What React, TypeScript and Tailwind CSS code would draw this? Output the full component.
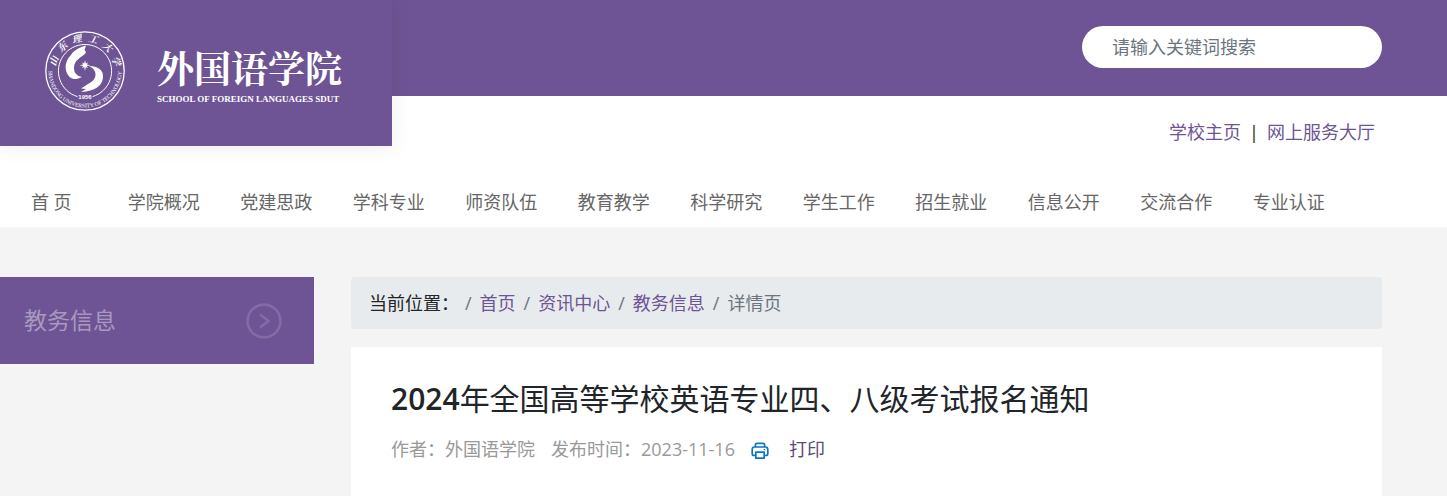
const navItems = [
    "首 页", "学院概况", "党建思政", "学科专业", "师资队伍", "教育教学",
    "科学研究", "学生工作", "招生就业", "信息公开", "交流合作", "专业认证",
]

const crumbs = ["首页", "资讯中心", "教务信息"]

function Emblem(){
    return (
        <svg viewBox="0 0 80 80" className="w-20 h-20 shrink-0" fill="none" stroke="#fff" role="img" aria-label="校徽">
            <circle cx="40" cy="40" r="39.2" strokeWidth="1.3" />
            <path d="M32.5 65.6A26.6 26.6 0 1 1 47.5 65.6" strokeWidth="1" />
            <path id="arcTop" d="M10.5 40A29.5 29.5 0 0 1 69.5 40" stroke="none" />
            <path id="arcBottom" d="M3.4 40A36.6 36.6 0 0 0 76.6 40" stroke="none" />
            <g fill="#fff" stroke="none">
                {["山", "东", "理", "工", "大", "学"].map((c, i) => (
                    <text key={c} fontSize="9.5" fontStyle="italic" fontWeight="bold" fontFamily="Noto Serif CJK SC, serif" textAnchor="middle">
                        <textPath href="#arcTop" startOffset={`${10 + i * 16}%`}>{c}</textPath>
                    </text>
                ))}
                <text fontSize="5.6" fontFamily="Liberation Serif, serif" textAnchor="middle">
                    <textPath href="#arcBottom" startOffset="50%">SHANDONG UNIVERSITY OF TECHNOLOGY</textPath>
                </text>
                <text x="40" y="68" fontSize="6" fontWeight="bold" fontFamily="Liberation Sans, sans-serif" textAnchor="middle">1956</text>
                {/* flame and wave */}
                <path d="M41 14.5C34 16.5 28 20 26 24C20 30 19 38 23 44C26 49 31 49 37 46C32 45 29 42 29 37C29 31 33 28 38 24.5C42 22 41 20.5 39.5 19Z" />
                <path d="M44 35C53 35 58.5 39 58 46C57.5 55 50 60 36 61L41 58L36 57.5L43 53C48 50.5 50.5 47.5 50.5 43.5C50.5 39.5 47.5 36.5 44 35Z" />
                <path d="M40 29L40.8 32.5L43 31.2L41.8 33.4L45.5 34.2L41.8 35L43 37.2L40.8 36L40 40L39.2 36L37 37.2L38.2 35L34.5 34.2L38.2 33.4L37 31.2L39.2 32.5Z" />
            </g>
        </svg>
    )
}

function Header(){
    return (
        <header className="bg-white">
            <div className="flex items-start">
                <a href="#" className="relative z-10 w-[392px] h-[146px] shrink-0 flex items-center pl-[45px] pb-1 gap-8 bg-[#6e5494] text-white shadow-[0_0_20px_rgba(0,0,0,0.08)]">
                    <Emblem />
                    <span className="flex flex-col whitespace-nowrap pt-3">
                        <span className="font-['Noto_Serif_CJK_SC','Noto_Sans_CJK_SC',serif] font-bold text-[37px] leading-10">外国语学院</span>
                        <span className="font-['Liberation_Serif',serif] font-bold text-[9px] leading-4 mt-1">SCHOOL OF FOREIGN LANGUAGES SDUT</span>
                    </span>
                </a>
                <div className="flex-1">
                    <div className="h-24 flex justify-end items-start bg-[#6e5494] pt-[26px] pr-[65px]">
                        <input type="text" aria-label="搜索" placeholder="请输入关键词搜索" className="w-[300px] h-[42px] rounded-full bg-white px-[30px] outline-none placeholder:text-[#6c757d]" />
                    </div>
                    <div className="flex justify-end gap-2 pt-6 pr-[72px] leading-6 text-[#6e5494]">
                        <a href="#">学校主页</a>
                        <span className="text-[#212529]">|</span>
                        <a href="#">网上服务大厅</a>
                    </div>
                </div>
            </div>
            {/* main menu */}
            <nav className="grid grid-cols-12 w-[93.3%] -ml-[5px] pt-11 pb-[13px] leading-6 text-center whitespace-nowrap text-[#666]">
                {navItems.map((item) => (
                    <a key={item} href="#">{item}</a>
                ))}
            </nav>
        </header>
    )
}

function PrintIcon(){
    return (
        <svg viewBox="0 0 18 18" className="w-[18px] h-[18px] mt-1" fill="none" stroke="#0878bf" strokeWidth="1.7" strokeLinejoin="round" aria-hidden="true">
            <path d="M4.4 5V3Q4.4 1.3 6 1.3H12Q13.6 1.3 13.6 3V5" />
            <path d="M4.4 13.5H3Q1.2 13.5 1.2 11.5V7.5Q1.2 5 3.5 5H14.5Q16.8 5 16.8 7.5V11.5Q16.8 13.5 15 13.5H13.6" />
            <path d="M4.8 10.2H13.2V16.2H4.8Z" />
            <path d="M12.6 7.6H14.2" strokeWidth="1.2" />
        </svg>
    )
}

export default function App(){
    return (
        <div className="flex flex-col min-h-screen bg-[#f4f4f4] font-['Open_Sans','Noto_Sans_CJK_SC',sans-serif] text-lg text-[#212529]">
            <Header />
            <main className="flex-1 flex pt-[50px] pr-[65px]">
                <aside className="w-[314px] shrink-0 mr-[37px]">
                    <h2 className="h-[87px] flex items-center justify-between pl-6 pr-8 bg-[#6e5494] text-[23px] text-[#a998bf]">
                        教务信息
                        <svg viewBox="0 0 36 36" className="w-9 h-9" fill="none" stroke="#836ba5" strokeWidth="2.6" aria-hidden="true">
                            <circle cx="18" cy="18" r="16.4" />
                            <path d="M14 11.5L22.5 18L14 24.5" />
                        </svg>
                    </h2>
                </aside>
                <div className="flex-1 min-w-0 flex flex-col">
                    <nav aria-label="当前位置" className="h-[52px] flex items-center rounded bg-[#e8ebee] pl-[18px]">
                        <span className="w-24">当前位置：</span>
                        {crumbs.map((c) => (
                            <span key={c} className="flex">
                                <span className="text-[#6c757d] mr-2">/</span>
                                <a href="#" className="text-[#6e5494] mr-2">{c}</a>
                            </span>
                        ))}
                        <span className="text-[#6c757d] mr-2">/</span>
                        <span className="text-[#6c757d]">详情页</span>
                    </nav>
                    <article className="flex-1 mt-[18px] bg-white px-10 pt-8 pb-6">
                        <h1 className="text-[30px] leading-10"><span className="font-semibold">2024</span>年全国高等学校英语专业四、八级考试报名通知</h1>
                        <div className="flex items-center mt-4 leading-7 text-[#999]">
                            <span className="mr-4">作者：外国语学院</span>
                            <span className="mr-4">发布时间：2023-11-16</span>
                            <button type="button" className="flex items-center gap-5 text-[#5a4a78]">
                                <PrintIcon />
                                打印
                            </button>
                        </div>
                    </article>
                </div>
            </main>
        </div>
    )
}
